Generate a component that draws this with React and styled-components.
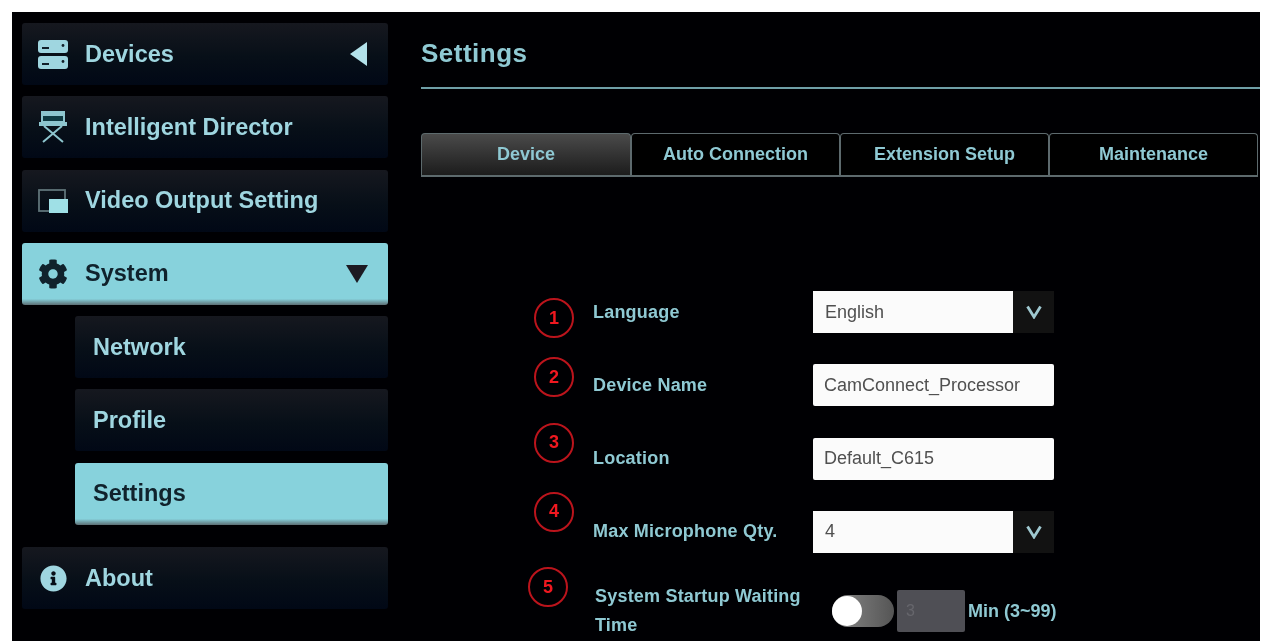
import React from 'react'
import styled, { createGlobalStyle } from 'styled-components'
import { FaCog, FaInfoCircle } from 'react-icons/fa'

const GlobalStyle = createGlobalStyle`
html, body {
  margin: 0;
  height: 100%;
  background: #fff;
  overflow: hidden;
}
`

const Page = styled.div`
  display: flex;
  height: 629px;
  margin: 12px 4px 0 12px;
  background: #000003;
  font-family: "Liberation Sans", Arial, sans-serif;
  font-weight: bold;
  overflow: hidden;
  filter: blur(0.4px);
`

const Sidebar = styled.nav`
  width: 376px;
  flex: none;
  padding: 11px 0 0 10px;
  box-sizing: border-box;
  display: flex;
  flex-direction: column;
  gap: 11.3px;
`

const SubMenu = styled.div`
  display: flex;
  flex-direction: column;
  gap: 11.3px;
  margin: 0 0 11px 53px;
`

const MenuItem = styled.div`
  height: 62px;
  flex: none;
  box-sizing: border-box;
  padding: 0 20px 0 ${p => (p.$sub ? '18px' : '16px')};
  display: flex;
  align-items: center;
  font-size: 23.5px;
  border-radius: 3px;
  color: ${p => (p.$active ? '#10222c' : '#9fd6e0')};
  background: ${p =>
    p.$active
      ? 'linear-gradient(#87d2dc 0, #87d2dc 90%, #5d6f75 100%)'
      : 'linear-gradient(#16181f, #070f18 55%, #010816)'};
`

const IconSlot = styled.span`
  width: 30px;
  margin-right: 17px;
  display: flex;
  justify-content: center;
  font-size: 30px;
  color: inherit;
  svg {
    display: block;
  }
`

const Label = styled.span`
  flex: 1;
`

const Content = styled.main`
  flex: 1;
  min-width: 0;
  padding: 0 2px 0 33px;
`

const Title = styled.h1`
  margin: 0 -2px 0 0;
  height: 77px;
  box-sizing: border-box;
  padding-top: 27px;
  font-size: 26px;
  line-height: 28px;
  letter-spacing: 0.5px;
  color: #8fc9d3;
  border-bottom: 2px solid #6f9fa7;
`

const Tabs = styled.div`
  display: grid;
  grid-template-columns: 210px 209px 209px 209px;
  margin-top: 44px;
  height: 44px;
  box-sizing: border-box;
  border-bottom: 2px solid #5d6a6d;
`

const Tab = styled.div`
  display: flex;
  align-items: center;
  justify-content: center;
  font-size: 18px;
  color: #8fc9d3;
  border: 1px solid #5d6a6d;
  border-bottom: 0;
  border-radius: 4px 4px 0 0;
  background: ${p => (p.$active ? 'linear-gradient(#4a4a4a, #1c1c1c)' : '#000')};
`

const Form = styled.div`
  display: flex;
  flex-direction: column;
  padding: 114px 0 0 113px;
`

const Row = styled.div`
  display: flex;
  align-items: center;
  height: 42px;
  margin-bottom: 31.3px;
  margin-top: ${p => p.$gap || 0}px;
`

const Mark = styled.span`
  position: relative;
  top: ${p => p.$top}px;
  left: ${p => p.$left || 0}px;
  width: 40px;
  height: 40px;
  flex: none;
  margin-right: 19px;
  box-sizing: border-box;
  border: 2.5px solid #bb141c;
  border-radius: 50%;
  display: flex;
  align-items: center;
  justify-content: center;
  font-size: 18px;
  color: #f01820;
`

const FieldName = styled.label`
  width: ${p => (p.$wide ? 218 : 220)}px;
  margin-left: ${p => (p.$wide ? 2 : 0)}px;
  flex: none;
  font-size: 18px;
  line-height: 29px;
  letter-spacing: 0.2px;
  color: #8fc9d3;
`

const TextField = styled.div`
  width: 241px;
  height: 42px;
  box-sizing: border-box;
  padding-left: ${p => (p.$select ? '12px' : '11px')};
  display: flex;
  align-items: center;
  background: #fbfbfb;
  border-radius: 2px;
  font-size: 18px;
  font-weight: normal;
  color: #505050;
`

const SelectBox = styled.div`
  display: flex;
  width: 241px;
  height: 42px;
  background: #121212;
`

const SelectValue = styled(TextField)`
  width: 200px;
  border-radius: 0;
`

const Caret = styled.span`
  flex: 1;
  display: flex;
  align-items: center;
  justify-content: center;
`

const Toggle = styled.span`
  position: relative;
  width: 62px;
  height: 32px;
  margin: 0 3px 0 19px;
  flex: none;
  border-radius: 16px;
  background: linear-gradient(90deg, #8a8a8a, #555);
  &::after {
    content: '';
    position: absolute;
    left: 0;
    top: 1px;
    width: 30px;
    height: 30px;
    border-radius: 50%;
    background: #fff;
  }
`

const WaitBox = styled.div`
  width: 68px;
  height: 42px;
  margin-right: 3px;
  box-sizing: border-box;
  padding-left: 9px;
  display: flex;
  align-items: center;
  background: #4f4f55;
  border-radius: 2px;
  font-size: 16px;
  font-weight: normal;
  color: #66666c;
`

const Unit = styled.span`
  font-size: 18px;
  color: #8fc9d3;
  white-space: nowrap;
`

const ServerIcon = () => (
  <svg width="30" height="29" viewBox="0 0 30 29">
    <rect x="0" y="0" width="30" height="13" rx="3" fill="#9fd6e0" />
    <rect x="0" y="16" width="30" height="13" rx="3" fill="#9fd6e0" />
    <path d="M4 8h7M4 24h7" stroke="#12202a" strokeWidth="2" />
    <circle cx="25" cy="5.5" r="1.4" fill="#12202a" />
    <circle cx="25" cy="21.5" r="1.4" fill="#12202a" />
  </svg>
)

const DirectorIcon = () => (
  <svg width="28" height="32" viewBox="0 0 28 32" fill="none" stroke="#8dc5ce">
    <rect x="2" y="0" width="24" height="4" fill="#8dc5ce" stroke="none" />
    <rect x="3" y="4" width="22" height="7" fill="#0f3a42" strokeWidth="2" />
    <rect x="0" y="11" width="28" height="4" fill="#8dc5ce" stroke="none" />
    <path d="M5 15l19 16M23 15L4 31" strokeWidth="2" />
  </svg>
)

const OutputIcon = () => (
  <svg width="30" height="24" viewBox="0 0 30 24" fill="none">
    <rect x="1" y="1" width="26" height="21" stroke="#5f7479" strokeWidth="1.8" />
    <rect x="11" y="10" width="19" height="14" fill="#9fe0e6" />
  </svg>
)

const ChevronDown = () => (
  <svg width="16" height="14" viewBox="0 0 16 14" fill="none" stroke="#9fc8d0" strokeWidth="2.8">
    <path d="M1.5 1.5L8 12l6.5-10.5" />
  </svg>
)

const fields = [
  { id: 1, name: 'Language', value: 'English', select: true, top: 6 },
  { id: 2, name: 'Device Name', value: 'CamConnect_Processor', top: -8 },
  { id: 3, name: 'Location', value: 'Default_C615', top: -16 },
  { id: 4, name: 'Max Microphone Qty.', value: '4', select: true, top: -20 },
]

const App = () => (
  <Page>
    <GlobalStyle />
    <Sidebar>
      <MenuItem>
        <IconSlot><ServerIcon /></IconSlot>
        <Label>Devices</Label>
        <svg width="18" height="24" viewBox="0 0 18 24"><path d="M17 0v24L0 12z" fill="#b3e2ea" /></svg>
      </MenuItem>
      <MenuItem>
        <IconSlot><DirectorIcon /></IconSlot>
        <Label>Intelligent Director</Label>
      </MenuItem>
      <MenuItem>
        <IconSlot><OutputIcon /></IconSlot>
        <Label>Video Output Setting</Label>
      </MenuItem>
      <MenuItem $active>
        <IconSlot><FaCog /></IconSlot>
        <Label>System</Label>
        <svg width="22" height="18" viewBox="0 0 22 18"><path d="M0 0h22L11 18z" fill="#1c1a22" /></svg>
      </MenuItem>
      <SubMenu>
        <MenuItem $sub>Network</MenuItem>
        <MenuItem $sub>Profile</MenuItem>
        <MenuItem $sub $active>Settings</MenuItem>
      </SubMenu>
      <MenuItem>
        <IconSlot><FaInfoCircle size={27} /></IconSlot>
        <Label>About</Label>
      </MenuItem>
    </Sidebar>
    <Content>
      <Title>Settings</Title>
      <Tabs>
        <Tab $active>Device</Tab>
        <Tab>Auto Connection</Tab>
        <Tab>Extension Setup</Tab>
        <Tab>Maintenance</Tab>
      </Tabs>
      <Form>
        {fields.map(f => (
          <Row key={f.id}>
            <Mark $top={f.top}>{f.id}</Mark>
            <FieldName>{f.name}</FieldName>
            {f.select ? (
              <SelectBox>
                <SelectValue $select>{f.value}</SelectValue>
                <Caret><ChevronDown /></Caret>
              </SelectBox>
            ) : (
              <TextField>{f.value}</TextField>
            )}
          </Row>
        ))}
        <Row $gap={6}>
          <Mark $top={-24} $left={-6}>5</Mark>
          <FieldName $wide>System Startup Waiting Time</FieldName>
          <Toggle />
          <WaitBox>3</WaitBox>
          <Unit>Min (3~99)</Unit>
        </Row>
      </Form>
    </Content>
  </Page>
)

export default App
